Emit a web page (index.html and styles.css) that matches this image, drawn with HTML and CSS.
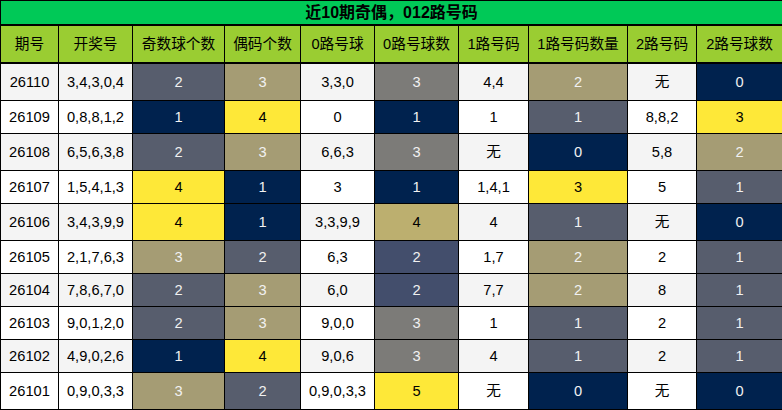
FILE: index.html
```html
<!DOCTYPE html>
<html lang="zh">
<head>
<meta charset="utf-8">
<title>近10期奇偶，012路号码</title>
<link rel="stylesheet" href="styles.css">
</head>
<body>
<table class="grid">
  <colgroup>
    <col class="w1"><col class="w2"><col class="w3"><col class="w4"><col class="w5">
    <col class="w6"><col class="w7"><col class="w8"><col class="w9"><col class="w10">
  </colgroup>
  <thead>
    <tr><th class="title" colspan="10">近10期奇偶，012路号码</th></tr>
    <tr class="head">
      <th>期号</th><th>开奖号</th><th>奇数球个数</th><th>偶码个数</th><th>0路号球</th>
      <th>0路号球数</th><th>1路号码</th><th>1路号码数量</th><th>2路号码</th><th>2路号球数</th>
    </tr>
  </thead>
  <tbody>
    <tr class="tall"><td>26110</td><td>3,4,3,0,4</td><td class="s1">2</td><td class="s2">3</td><td>3,3,0</td><td class="m2">3</td><td>4,4</td><td class="s2">2</td><td>无</td><td class="s0">0</td></tr>
    <tr><td>26109</td><td>0,8,8,1,2</td><td class="s0">1</td><td class="s3">4</td><td>0</td><td class="s0">1</td><td>1</td><td class="s1">1</td><td>8,8,2</td><td class="s3">3</td></tr>
    <tr class="tall"><td>26108</td><td>6,5,6,3,8</td><td class="s1">2</td><td class="s2">3</td><td>6,6,3</td><td class="m2">3</td><td>无</td><td class="s0">0</td><td>5,8</td><td class="s2">2</td></tr>
    <tr><td>26107</td><td>1,5,4,1,3</td><td class="s3">4</td><td class="s0">1</td><td>3</td><td class="s0">1</td><td>1,4,1</td><td class="s3">3</td><td>5</td><td class="s1">1</td></tr>
    <tr class="tall"><td>26106</td><td>3,4,3,9,9</td><td class="s3">4</td><td class="s0">1</td><td>3,3,9,9</td><td class="m3">4</td><td>4</td><td class="s1">1</td><td>无</td><td class="s0">0</td></tr>
    <tr><td>26105</td><td>2,1,7,6,3</td><td class="s2">3</td><td class="s1">2</td><td>6,3</td><td class="m1">2</td><td>1,7</td><td class="s2">2</td><td>2</td><td class="s1">1</td></tr>
    <tr><td>26104</td><td>7,8,6,7,0</td><td class="s1">2</td><td class="s2">3</td><td>6,0</td><td class="m1">2</td><td>7,7</td><td class="s2">2</td><td>8</td><td class="s1">1</td></tr>
    <tr><td>26103</td><td>9,0,1,2,0</td><td class="s1">2</td><td class="s2">3</td><td>9,0,0</td><td class="m2">3</td><td>1</td><td class="s1">1</td><td>2</td><td class="s1">1</td></tr>
    <tr><td>26102</td><td>4,9,0,2,6</td><td class="s0">1</td><td class="s3">4</td><td>9,0,6</td><td class="m2">3</td><td>4</td><td class="s1">1</td><td>2</td><td class="s1">1</td></tr>
    <tr class="tall"><td>26101</td><td>0,9,0,3,3</td><td class="s2">3</td><td class="s1">2</td><td>0,9,0,3,3</td><td class="s3">5</td><td>无</td><td class="s0">0</td><td>无</td><td class="s0">0</td></tr>
  </tbody>
</table>
</body>
</html>
```

FILE: styles.css
```css
html, body {
  margin: 0;
  padding: 0;
  background: #ffffff;
}

.grid {
  width: 782px;
  table-layout: fixed;
  border-collapse: collapse;
  font-family: "Liberation Sans", Arial, "Noto Sans CJK SC", sans-serif;
  font-size: 14.67px;
  color: #000;
}

.w1 { width: 58px; }
.w2 { width: 74px; }
.w3 { width: 92px; }
.w4 { width: 76px; }
.w5 { width: 74px; }
.w6 { width: 84px; }
.w7 { width: 70px; }
.w8 { width: 99px; }
.w9 { width: 69px; }
.w10 { width: 86px; }

.grid th,
.grid td {
  border: 1px solid #000;
  text-align: center;
  vertical-align: middle;
  padding: 0;
  line-height: 32px;
  white-space: nowrap;
  overflow: hidden;
}

.grid tr.tall td { line-height: 36px; }

.grid th.title {
  background: #00c957;
  font-size: 16px;
  font-weight: bold;
  line-height: 23px;
  border-bottom-width: 2px;
}

.head th {
  background: #9acd32;
  font-weight: normal;
  line-height: 36px;
  border-bottom-width: 2px;
}

tbody tr:nth-child(odd) td { background: #f4f4f4; }
tbody tr:nth-child(even) td { background: #ffffff; }

/* cividis-style gradient cells */
.grid td.s0 { background: #00224e; color: #f1f1f1; }
.grid td.s1 { background: #575d6d; color: #f1f1f1; }
.grid td.s2 { background: #a59c74; color: #f1f1f1; }
.grid td.s3 { background: #fee838; color: #000; }
.grid td.m1 { background: #434e6c; color: #f1f1f1; }
.grid td.m2 { background: #7c7b78; color: #f1f1f1; }
.grid td.m3 { background: #bcaf6f; color: #000; }
```
